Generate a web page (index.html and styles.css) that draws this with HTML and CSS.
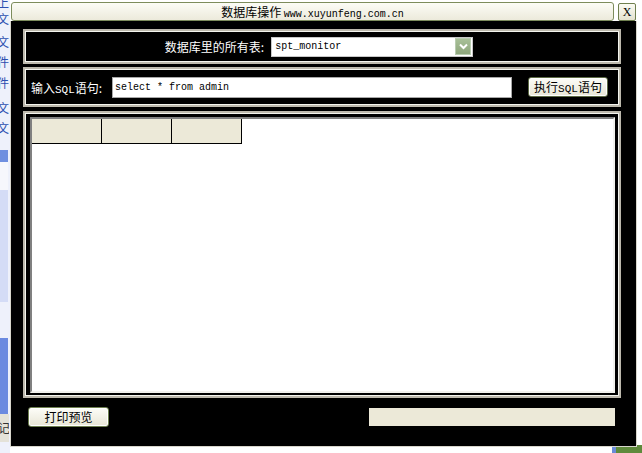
FILE: index.html
```html
<!DOCTYPE html>
<html lang="zh-CN">
<head>
<meta charset="utf-8">
<title>数据库操作</title>
<link rel="stylesheet" href="styles.css">
</head>
<body>
<div class="desk">
  <div class="strip">
    <span class="glyph g1">上</span>
    <span class="glyph g2">文</span>
    <span class="glyph g3">文</span>
    <span class="glyph g4">件</span>
    <span class="glyph g5">件</span>
    <span class="glyph g6">文</span>
    <span class="glyph g7">文</span>
    <div class="blk b1"></div>
    <div class="blk b2"></div>
    <div class="blk b3"></div>
    <div class="blk b4"></div>
    <div class="blk b5"><span class="glyph g8">记</span></div>
  </div>
  <div class="corner"></div>

  <div class="win">
    <div class="titlerow">
      <div class="titlebar">数据库操作&nbsp;<span class="asc">www.xuyunfeng.com.cn</span></div>
      <div class="closebtn">X</div>
    </div>
    <div class="frame">
      <div class="panel p1">
        <span class="label">数据库里的所有表:</span>
        <div class="select">
          <span class="asc">spt_monitor</span>
          <span class="drop">
            <svg width="9" height="7" viewBox="0 0 9 7"><path d="M1 1.5 L4.5 5 L8 1.5" fill="none" stroke="#fff" stroke-width="2"/></svg>
          </span>
        </div>
      </div>
      <div class="panel p2">
        <span class="label">输入<span class="asc">SQL</span>语句:</span>
        <div class="input"><span class="asc">select * from admin</span></div>
        <div class="btn run">执行<span class="asc">SQL</span>语句</div>
      </div>
      <div class="panel p3">
        <div class="grid">
          <div class="head">
            <div class="cell"></div>
            <div class="cell"></div>
            <div class="cell"></div>
          </div>
        </div>
      </div>
      <div class="bottom">
        <div class="btn print">打印预览</div>
        <div class="status"></div>
      </div>
    </div>
  </div>
</div>
</body>
</html>
```
FILE: styles.css
```css
* { box-sizing: border-box; }
html, body { margin: 0; padding: 0; }
body {
  background: #ffffff;
  font-family: "Noto Sans CJK SC", "Liberation Sans", sans-serif;
  font-size: 12px;
  color: #000;
}
.desk {
  position: relative;
  width: 642px;
  height: 453px;
  overflow: hidden;
  background: #ffffff;
}
.strip {
  position: absolute;
  left: 0;
  top: 0;
  width: 10px;
  height: 453px;
  background: #eef1fb;
  overflow: hidden;
}
.glyph {
  position: absolute;
  left: -3px;
  font-size: 12px;
  line-height: 12px;
  color: #2c4fb0;
}
.g1 { top: -3px; }
.g2 { top: 13px; }
.g3 { top: 36px; }
.g4 { top: 56px; }
.g5 { top: 77px; }
.g6 { top: 102px; }
.g7 { top: 122px; }
.g8 { top: 8px; left: -2px; color: #333; }
.blk { position: absolute; left: 0; width: 8px; }
.b1 { top: 150px; height: 12px; background: #6f8fe0; }
.b2 { top: 162px; height: 28px; background: #f6f7fc; }
.b3 { top: 190px; height: 112px; background: #d4dcf6; }
.b4 { top: 338px; height: 76px; background: #6b8ae0; }
.b5 { top: 414px; height: 28px; background: #e4e2d8; width: 9px; overflow: hidden; }
.corner {
  position: absolute;
  right: 0;
  bottom: 0;
  width: 30px;
  height: 8px;
  background: linear-gradient(90deg, #6a8ad8 0 4px, #5f8a3c 4px 100%);
}

.win {
  position: absolute;
  left: 10px;
  top: 1px;
  width: 627px;
}
.titlerow {
  display: flex;
  align-items: flex-start;
  height: 20px;
  padding-top: 1px;
}
.titlebar {
  margin-left: 1px;
  width: 603px;
  height: 19px;
  border: 1px solid #7d8c5c;
  border-radius: 3px;
  background: linear-gradient(#fcfcf6, #eceadb);
  text-align: center;
  line-height: 17px;
  font-size: 12px;
}
.asc {
  font-family: "Liberation Mono", monospace;
  font-size: 10px;
}
.closebtn {
  margin-left: 4px;
  width: 18px;
  height: 18px;
  margin-top: 1px;
  border: 1px solid #6f7f4f;
  border-radius: 2px;
  background: linear-gradient(#fbfbf3, #e4e2cf);
  font-family: "Liberation Serif", serif;
  font-size: 12px;
  line-height: 16px;
  text-align: center;
}
.frame {
  height: 426px;
  background: #000;
  border: 1px solid #d8d6cc;
  border-top: none;
  padding: 8px 15px 0 12px;
  display: flex;
  flex-direction: column;
}
.panel {
  border: 2px solid #bdb9ad;
  box-shadow: inset 0 0 0 1px #f4f4ee;
  background: #000;
}
.label { color: #fff; font-size: 12px; white-space: nowrap; }
.label .asc, .btn .asc { font-size: 11px; }
.p1 {
  height: 35px;
  display: flex;
  align-items: center;
  justify-content: center;
  gap: 7px;
  padding-right: 6px;
}
.select {
  width: 202px;
  height: 20px;
  background: #fff;
  border: 1px solid #c8c8c8;
  display: flex;
  align-items: center;
  justify-content: space-between;
  padding-left: 3px;
  padding-right: 1px;
}
.drop {
  width: 16px;
  height: 17px;
  background: linear-gradient(#a8c098, #8ea67c);
  border: 1px solid #b8ccb0;
  display: flex;
  align-items: center;
  justify-content: center;
}
.p2 {
  margin-top: 3px;
  height: 40px;
  display: flex;
  align-items: center;
  padding-left: 6px;
}
.p2 .label { width: 81px; }
.input {
  width: 400px;
  height: 21px;
  background: #fff;
  border: 1px solid #a8a8a8;
  display: flex;
  align-items: center;
  padding-left: 2px;
}
.btn {
  border: 1px solid #5d6b45;
  border-radius: 3px;
  background: linear-gradient(#fdfdf8, #e8e6d6);
  text-align: center;
  font-size: 12px;
  box-shadow: inset 0 0 0 1px #fff;
  white-space: nowrap;
}
.run {
  margin-left: 16px;
  width: 80px;
  height: 20px;
  line-height: 17px;
}
.p3 {
  margin-top: 4px;
  height: 287px;
  padding: 4px 4px 3px 5px;
}
.grid {
  height: 100%;
  background: #fff;
  border: 2px solid;
  border-color: #808080 #f2f2ee #f2f2ee #808080;
}
.head { display: flex; }
.cell {
  width: 70px;
  height: 25px;
  background: #ece9d8;
  border-right: 1px solid #000;
  border-bottom: 1px solid #000;
}
.bottom {
  display: flex;
  align-items: flex-start;
  padding-top: 9px;
  padding-left: 5px;
}
.print {
  width: 81px;
  height: 20px;
  line-height: 17px;
  border-color: #6e8050;
}
.status {
  margin-left: 260px;
  margin-top: 1px;
  width: 246px;
  height: 18px;
  background: #ece9d8;
}
```
